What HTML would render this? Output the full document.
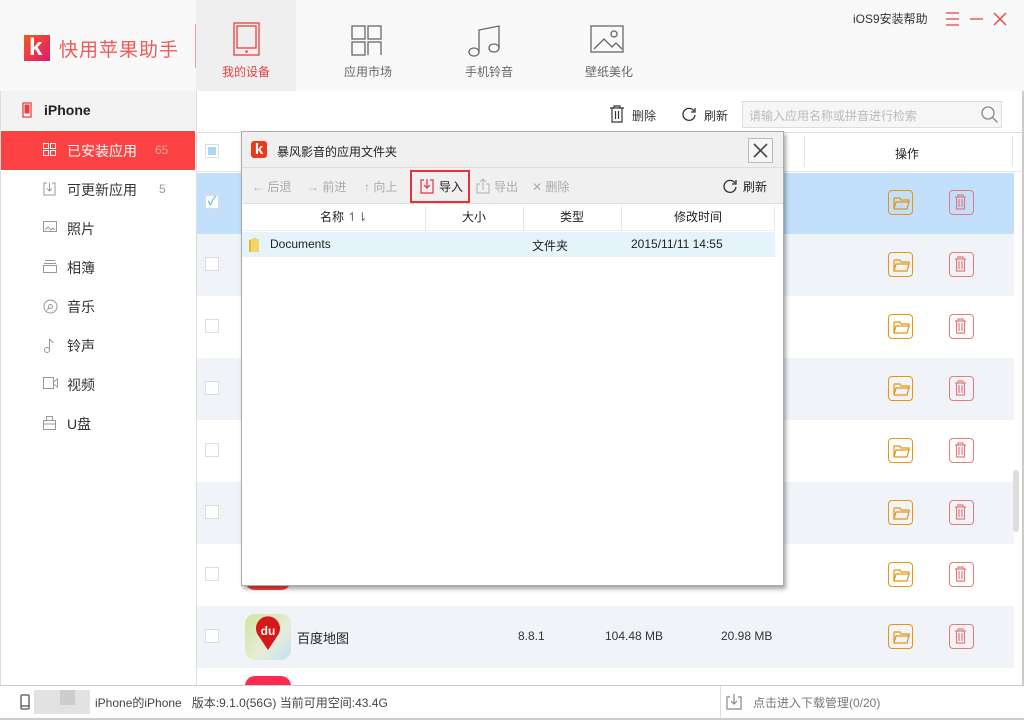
<!DOCTYPE html>
<html><head><meta charset="utf-8">
<style>
*{margin:0;padding:0;box-sizing:border-box}
body{width:1024px;height:720px;position:relative;overflow:hidden;background:#fff;font-family:"Liberation Sans","Noto Sans CJK SC",sans-serif;font-size:12px;color:#333}
.a{position:absolute}
.hdr{left:0;top:0;width:1024px;height:91px;background:#f9f9f9}
.tab{top:0;width:100px;height:91px;text-align:center;color:#666;font-size:12px}
.tab span{position:absolute;left:0;right:0;top:63px}
.side{left:0;top:91px;width:197px;height:595px;background:#fff;border-right:1px solid #ddd;border-left:1px solid #ddd}
.si{left:1px;width:194px;height:39px;font-size:14px;color:#333}
.si .t{position:absolute;left:66px;top:10px}
.si svg{position:absolute;left:42px;top:12px}
.row{left:197px;width:817px;height:62px}
.cb{position:absolute;left:8px;width:14px;height:14px;border:1px solid #ddd;background:#fff}
.fb{position:absolute;left:691px;width:25px;height:25px;border:1.5px solid #e8940c;border-radius:4px}
.tb{position:absolute;left:752px;width:25px;height:25px;border:1.5px solid #e67a7a;border-radius:4px}
.dlg{left:241px;top:131px;width:543px;height:455px;background:#fff;border:1px solid #aaa;box-shadow:2px 3px 4px rgba(0,0,0,.35)}
.tool{color:#aaa;font-size:12px;top:46px}
</style></head><body>
<div class="a hdr"></div>
<div class="a" style="left:24px;top:35px;width:26px;height:26px;background:linear-gradient(135deg,#f05a22,#e0186e)"></div>
<div class="a" style="left:29px;top:36px;color:#fff;font-weight:bold;font-size:24px;line-height:24px;font-family:'Liberation Sans',sans-serif">k</div>
<div class="a" style="left:59px;top:35px;font-size:19px;color:#ee5a5a;letter-spacing:1px">快用苹果助手</div>
<div class="a" style="left:195px;top:24px;width:1px;height:44px;background:#f0a0a0"></div>
<div class="a tab" style="left:196px;background:#efefef;color:#e84040"><svg class="a" style="left:37px;top:22px" width="28" height="34"><rect x="1" y="1" width="25" height="32" fill="none" stroke="#e84040" stroke-width="1.3"/><rect x="4" y="4" width="19" height="22" fill="none" stroke="#e84040" stroke-width="1.3"/><circle cx="13.5" cy="29.5" r="1.3" fill="#e84040"/></svg><span>我的设备</span></div>
<div class="a tab" style="left:318px"><svg class="a" style="left:33px;top:25px" width="32" height="32" stroke="#666" fill="none" stroke-width="1.3"><rect x="1" y="1" width="13" height="13"/><rect x="17" y="1" width="13" height="13"/><rect x="1" y="17" width="13" height="13"/><path d="M17 30V17h13v13"/></svg><span>应用市场</span></div>
<div class="a tab" style="left:439px"><svg class="a" style="left:29px;top:24px" width="36" height="34" stroke="#666" fill="none" stroke-width="1.3"><ellipse cx="6" cy="28" rx="5" ry="4"/><ellipse cx="26" cy="24" rx="5" ry="4"/><path d="M11 28V6l20-4v22"/></svg><span>手机铃音</span></div>
<div class="a tab" style="left:559px"><svg class="a" style="left:31px;top:25px" width="36" height="30" stroke="#666" fill="none" stroke-width="1.3"><rect x="1" y="1" width="32" height="26"/><circle cx="24" cy="9" r="3"/><path d="M4 24l10-10 8 8 4-4 6 6"/></svg><span>壁纸美化</span></div>
<div class="a" style="left:853px;top:10px;font-size:12px;color:#333">iOS9安装帮助</div>
<svg class="a" style="left:944px;top:11px" width="72" height="16" stroke="#e84040" stroke-width="1.3" fill="none"><path d="M2 2h13M2 8h13M2 14h13M26 8h13M50 2l12 12M62 2L50 14"/></svg>
<div class="a side"></div>
<div class="a" style="left:1px;top:91px;width:195px;height:39px;background:#f3f3f3"></div>
<svg class="a" style="left:22px;top:102px" width="10" height="16"><rect x="1" y="1" width="8" height="14" fill="#fff" stroke="#e84040" stroke-width="1.3"/><rect x="2.5" y="2.5" width="5" height="9" fill="#e84040"/></svg>
<div class="a" style="left:44px;top:102px;font-size:14px;font-weight:bold;color:#222">iPhone</div>
<div class="a si" style="top:131px;background:#fb4141;color:#fff"><svg width="13" height="13" stroke="#fff" fill="none"><rect x=".5" y=".5" width="5" height="5"/><rect x="7.5" y=".5" width="5" height="5"/><rect x=".5" y="7.5" width="5" height="5"/><rect x="7.5" y="7.5" width="5" height="5"/></svg><span class="t">已安装应用</span><span class="a" style="left:154px;top:12px;font-size:12px;color:#f4a0a0">65</span></div>
<div class="a si" style="top:170px"><svg width="13" height="14" stroke="#999" fill="none"><path d="M4 1H1v12h11V1H9M6.5 1v8M4 6.5l2.5 2.5L9 6.5"/></svg><span class="t">可更新应用</span><span class="a" style="left:158px;top:12px;font-size:12px;color:#999">5</span></div>
<div class="a si" style="top:209px"><svg width="14" height="12" stroke="#999" fill="none"><rect x=".5" y=".5" width="13" height="10"/><path d="M2 9l3-3 3 3 2-2 2 2"/></svg><span class="t">照片</span></div>
<div class="a si" style="top:248px"><svg width="14" height="13" stroke="#999" fill="none"><path d="M2 .5h10M1 3.5h12"/><rect x=".5" y="5.5" width="13" height="7"/></svg><span class="t">相簿</span></div>
<div class="a si" style="top:287px"><svg width="15" height="15" stroke="#999" fill="none"><circle cx="7.5" cy="7.5" r="6.5"/><circle cx="7.5" cy="7.5" r="2"/><path d="M4 11l2-2"/></svg><span class="t">音乐</span></div>
<div class="a si" style="top:326px"><svg width="12" height="15" stroke="#999" fill="none"><circle cx="4" cy="12" r="2.5"/><path d="M6.5 12V1l4 4"/></svg><span class="t">铃声</span></div>
<div class="a si" style="top:365px"><svg width="15" height="12" stroke="#999" fill="none"><rect x=".5" y=".5" width="10" height="11"/><path d="M10.5 5l4-3v8l-4-3"/></svg><span class="t">视频</span></div>
<div class="a si" style="top:404px"><svg width="13" height="14" stroke="#999" fill="none"><rect x="3.5" y=".5" width="6" height="4"/><rect x=".5" y="4.5" width="12" height="9"/><path d="M1 8h11"/></svg><span class="t">U盘</span></div>
<svg class="a" style="left:609px;top:105px" width="16" height="18" stroke="#333" fill="none" stroke-width="1.2"><path d="M1 3h14M5 3V1h6v2M3 3v14h10V3M6.5 6v8M9.5 6v8"/></svg>
<div class="a" style="left:632px;top:107px">删除</div>
<svg class="a" style="left:681px;top:106px" width="16" height="16" stroke="#333" fill="none" stroke-width="1.3"><path d="M13 5A6 6 0 1 0 14 9"/><path d="M14 2v4h-4" /></svg>
<div class="a" style="left:704px;top:107px">刷新</div>
<div class="a" style="left:742px;top:101px;width:260px;height:27px;border:1px solid #ddd;background:#f6f6f6;color:#bbb;padding:5px 6px">请输入应用名称或拼音进行检索</div>
<svg class="a" style="left:981px;top:106px" width="18" height="18" stroke="#888" fill="none" stroke-width="1.3"><circle cx="7" cy="7" r="6"/><path d="M11.5 11.5l5 5"/></svg>
<div class="a" style="left:197px;top:132px;width:825px;height:1px;background:#ddd"></div>
<div class="a" style="left:197px;top:133px;width:825px;height:39px;background:#fff;border-bottom:1px solid #e6e6e6"></div>
<div class="a" style="left:804px;top:136px;width:1px;height:30px;background:#e6e6e6"></div>
<div class="a" style="left:1012px;top:136px;width:1px;height:30px;background:#e6e6e6"></div>
<div class="a" style="left:205px;top:144px;width:14px;height:14px;border:1px solid #ddd;background:#fff"><div style="margin:2px;width:8px;height:8px;background:#a9d7f5"></div></div>
<div class="a" style="left:895px;top:145px;color:#222">操作</div>
<div class="a row" style="top:173px;background:#c2e0fb"><div class="cb" style="top:22px;color:#4aa3e8;font-size:12px;line-height:11px;text-align:center">✓</div><div class="fb" style="top:17px"></div><div class="tb" style="top:17px"></div></div>
<div class="a row" style="top:234px;background:#f0f4f9"><div class="cb" style="top:23px"></div><div class="fb" style="top:18px"></div><div class="tb" style="top:18px"></div></div>
<div class="a row" style="top:296px;background:#fff"><div class="cb" style="top:23px"></div><div class="fb" style="top:18px"></div><div class="tb" style="top:18px"></div></div>
<div class="a row" style="top:358px;background:#f0f4f9"><div class="cb" style="top:23px"></div><div class="fb" style="top:18px"></div><div class="tb" style="top:18px"></div></div>
<div class="a row" style="top:420px;background:#fff"><div class="cb" style="top:23px"></div><div class="fb" style="top:18px"></div><div class="tb" style="top:18px"></div></div>
<div class="a row" style="top:482px;background:#f0f4f9"><div class="cb" style="top:23px"></div><div class="fb" style="top:18px"></div><div class="tb" style="top:18px"></div></div>
<div class="a row" style="top:544px;background:#fff"><div class="cb" style="top:23px"></div><div class="fb" style="top:18px"></div><div class="tb" style="top:18px"></div><div class="a" style="left:48px;top:20px;width:46px;height:26px;background:#f2453d;border-radius:10px"></div></div>
<div class="a row" style="top:606px;background:#f0f4f9"><div class="cb" style="top:23px"></div><div class="fb" style="top:18px"></div><div class="tb" style="top:18px"></div>
<div class="a" style="left:48px;top:8px;width:46px;height:46px;border-radius:10px;background:linear-gradient(135deg,#cfe6a0,#e8ecd8 60%,#bfe4f5)"></div>
<svg class="a" style="left:56px;top:10px" width="30" height="36"><path d="M15 34L5 19A12 12 0 1 1 25 19Z" fill="#d71818"/><text x="15" y="19" fill="#fff" font-size="12" font-weight="bold" text-anchor="middle" font-family="Liberation Sans">du</text></svg>
<div class="a" style="left:100px;top:22px;font-size:13px;color:#222">百度地图</div>
<div class="a" style="left:321px;top:23px;font-size:12px">8.8.1</div>
<div class="a" style="left:408px;top:23px;font-size:12px">104.48 MB</div>
<div class="a" style="left:524px;top:23px;font-size:12px">20.98 MB</div>
</div>
<div class="a row" style="top:668px;height:18px;background:#fff"><div class="a" style="left:48px;top:8px;width:46px;height:12px;background:#fb2c50;border-radius:10px 10px 0 0"></div></div>
<svg class="a" style="left:888px;top:190px" width="90" height="460">
<defs><g id="f"><path d="M6 8h6l1 2h8v2" fill="none" stroke="#e8940c" stroke-width="1.2"/><path d="M6 8v11h13l2-7H8l-2 7" fill="none" stroke="#e8940c" stroke-width="1.2"/></g>
<g id="t"><path d="M67 7h11M70 7V5h5v2M68.5 7v12h8V7M71 9v8M74 9v8" fill="none" stroke="#e67a7a" stroke-width="1.2"/></g></defs>
<use href="#f"/><use href="#t"/>
<use href="#f" y="62"/><use href="#t" y="62"/><use href="#f" y="124"/><use href="#t" y="124"/><use href="#f" y="186"/><use href="#t" y="186"/><use href="#f" y="248"/><use href="#t" y="248"/><use href="#f" y="310"/><use href="#t" y="310"/><use href="#f" y="372"/><use href="#t" y="372"/><use href="#f" y="434"/><use href="#t" y="434"/>
</svg>
<div class="a" style="left:1013px;top:470px;width:6px;height:62px;background:#ddd;border-radius:3px"></div>
<div class="a" style="left:1022px;top:91px;width:2px;height:629px;background:#ccc"></div>
<div class="a dlg">
<div class="a" style="left:0;top:0;width:541px;height:36px;background:#f0f0f0;border-bottom:1px solid #ddd"></div>
<div class="a" style="left:9px;top:9px;width:16px;height:17px;background:#e83a1c;border-radius:3px;color:#fff;font-weight:bold;font-size:15px;line-height:17px;text-align:center">k</div>
<div class="a" style="left:35px;top:11px;color:#222">暴风影音的应用文件夹</div>
<div class="a" style="left:506px;top:6px;width:25px;height:25px;border:1px solid #bbb;background:#f6f6f6"><svg width="23" height="23" stroke="#444" stroke-width="1.6"><path d="M5 5l13 13M18 5L5 18"/></svg></div>
<div class="a" style="left:0;top:36px;width:541px;height:36px;background:#f0f0f0;border-bottom:1px solid #ddd"></div>
<div class="a tool" style="left:10px">← 后退</div>
<div class="a tool" style="left:65px">→ 前进</div>
<div class="a tool" style="left:122px">↑ 向上</div>
<div class="a" style="left:168px;top:38px;width:60px;height:33px;border:2px solid #e8303a"></div>
<svg class="a" style="left:178px;top:46px" width="14" height="16" stroke="#e8303a" fill="none" stroke-width="1.2"><path d="M4 2H1v13h12V2h-3M7 1v9M4 7l3 3 3-3"/></svg>
<div class="a" style="left:197px;top:46px;color:#222">导入</div>
<svg class="a" style="left:234px;top:46px" width="14" height="16" stroke="#bbb" fill="none" stroke-width="1.2"><path d="M4 6H1v9h12V6h-3M7 12V1M4 4l3-3 3 3"/></svg>
<div class="a tool" style="left:252px">导出</div>
<div class="a tool" style="left:290px">✕ 删除</div>
<svg class="a" style="left:480px;top:46px" width="16" height="16" stroke="#333" fill="none" stroke-width="1.3"><path d="M13 5A6 6 0 1 0 14 9"/><path d="M14 2v4h-4"/></svg>
<div class="a" style="left:501px;top:46px;color:#222">刷新</div>
<div class="a" style="left:0;top:72px;width:533px;height:27px;border-bottom:1px solid #eee"></div>
<div class="a" style="left:183px;top:74px;width:1px;height:24px;background:#e6e6e6"></div>
<div class="a" style="left:281px;top:74px;width:1px;height:24px;background:#e6e6e6"></div>
<div class="a" style="left:379px;top:74px;width:1px;height:24px;background:#e6e6e6"></div>
<div class="a" style="left:532px;top:74px;width:1px;height:24px;background:#e6e6e6"></div>
<div class="a" style="left:78px;top:76px;color:#222">名称 <span style="color:#666">↿⇂</span></div>
<div class="a" style="left:220px;top:76px;color:#222">大小</div>
<div class="a" style="left:318px;top:76px;color:#222">类型</div>
<div class="a" style="left:432px;top:76px;color:#222">修改时间</div>
<div class="a" style="left:0;top:100px;width:533px;height:25px;background:#e5f3fb"></div>
<svg class="a" style="left:6px;top:105px" width="12" height="16"><path d="M1 3l7-2v14l-7 0z" fill="#e6b82c"/><path d="M3 2h8v13H3z" fill="#f3d568"/></svg>
<div class="a" style="left:28px;top:105px;color:#222">Documents</div>
<div class="a" style="left:290px;top:105px;color:#222">文件夹</div>
<div class="a" style="left:389px;top:105px;color:#222">2015/11/11 14:55</div>
</div>
<div class="a" style="left:0;top:685px;width:1024px;height:35px;background:#fff;border-top:1px solid #ccc;border-bottom:2px solid #ccc"></div>
<svg class="a" style="left:20px;top:694px" width="10" height="16" stroke="#555" fill="none" stroke-width="1.3"><rect x="1" y="1" width="8" height="14" rx="1"/><path d="M1 12h8"/></svg>
<div class="a" style="left:34px;top:690px;width:56px;height:24px;background:#e2e2e2"></div>
<div class="a" style="left:60px;top:690px;width:15px;height:15px;background:#cfcdcb"></div>
<div class="a" style="left:95px;top:694px;color:#444">iPhone的iPhone&nbsp;&nbsp;&nbsp;版本:9.1.0(56G) 当前可用空间:43.4G</div>
<div class="a" style="left:720px;top:686px;width:1px;height:32px;background:#ddd"></div>
<svg class="a" style="left:726px;top:693px" width="16" height="17" stroke="#888" fill="none" stroke-width="1.2"><path d="M4 4H1v12h14V4h-3M8 1v10M5 8l3 3 3-3"/></svg>
<div class="a" style="left:753px;top:694px;color:#777">点击进入下载管理(0/20)</div>
</body></html>
